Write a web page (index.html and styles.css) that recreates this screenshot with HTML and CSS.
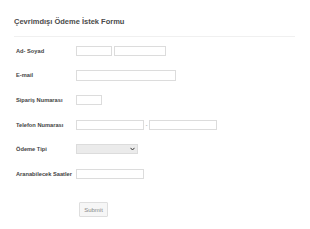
FILE: index.html
```html
<!DOCTYPE html>
<html lang="tr">
<head>
<meta charset="utf-8">
<title>Çevrimdışı Ödeme İstek Formu</title>
<link rel="stylesheet" href="styles.css">
</head>
<body>
<form class="form">
  <div class="header"><h1 class="title">Çevrimdışı Ödeme İstek Formu</h1></div>
  <div class="rows">
    <div class="row">
      <label class="label">Ad- Soyad</label>
      <div class="fields">
        <input class="input w-first" type="text">
        <input class="input w-last" type="text">
      </div>
    </div>
    <div class="row">
      <label class="label">E-mail</label>
      <div class="fields"><input class="input w-email" type="text"></div>
    </div>
    <div class="row">
      <label class="label">Sipariş Numarası</label>
      <div class="fields"><input class="input w-order" type="text"></div>
    </div>
    <div class="row">
      <label class="label">Telefon Numarası</label>
      <div class="fields">
        <input class="input w-phone" type="text">
        <span class="dash">-</span>
        <input class="input w-phone2" type="text">
      </div>
    </div>
    <div class="row">
      <label class="label">Ödeme Tipi</label>
      <div class="fields">
        <div class="select"><svg class="caret" viewBox="0 0 6 4" width="5" height="4"><path d="M0.6 0.6 L3 3.2 L5.4 0.6" fill="none" stroke="#333" stroke-width="1.2"/></svg></div>
      </div>
    </div>
    <div class="row">
      <label class="label">Aranabilecek Saatler</label>
      <div class="fields"><input class="input w-hours" type="text"></div>
    </div>
  </div>
  <div class="submit-row">
    <button class="submit" type="button">Submit</button>
  </div>
</form>
</body>
</html>
```
FILE: styles.css
```css
html, body {
  margin: 0;
  padding: 0;
  background: #fff;
}
body {
  font-family: "Liberation Sans", Arial, sans-serif;
  color: #555;
}
.form {
  padding: 14px 15px 0 14px;
  width: 281px;
}
.header {
  border-bottom: 1px solid #f0f0f0;
  height: 23px;
  box-sizing: border-box;
}
.title {
  margin: 0;
  font-size: 7.5px;
  font-weight: bold;
  line-height: 15px;
  color: #4a4a4a;
}
.rows {
  margin-top: 1.5px;
  padding-left: 2px;
}
.row {
  display: flex;
  align-items: center;
  height: 24.6px;
}
.label {
  width: 60px;
  flex: none;
  font-size: 5.7px;
  font-weight: bold;
  color: #444;
  white-space: nowrap;
}
.fields {
  display: flex;
  align-items: center;
}
.input {
  box-sizing: border-box;
  height: 10px;
  margin: 0;
  padding: 0;
  border: 1px solid #dcdcdc;
  background: #fff;
  outline: none;
}
.w-first { width: 36px; margin-right: 2px; }
.w-last { width: 52px; }
.w-email { width: 100px; height: 10.5px; }
.w-order { width: 26px; }
.w-phone { width: 68px; }
.w-phone2 { width: 68px; }
.w-hours { width: 68px; height: 10.5px; }
.dash {
  width: 5px;
  text-align: center;
  font-size: 5px;
  color: #777;
}
.select {
  box-sizing: border-box;
  width: 62px;
  height: 10px;
  border: 1px solid #dcdcdc;
  background: #ebebeb;
  display: flex;
  align-items: center;
  justify-content: flex-end;
  padding-right: 2px;
}
.caret { display: block; }
.submit-row {
  padding-left: 65px;
  margin-top: 11.5px;
}
.submit {
  box-sizing: border-box;
  width: 29px;
  height: 15px;
  margin: 0;
  padding: 0;
  border: 1px solid #dedede;
  border-radius: 1px;
  background: #f6f6f6;
  color: #888;
  font-family: "Liberation Sans", Arial, sans-serif;
  font-size: 6px;
}
```
